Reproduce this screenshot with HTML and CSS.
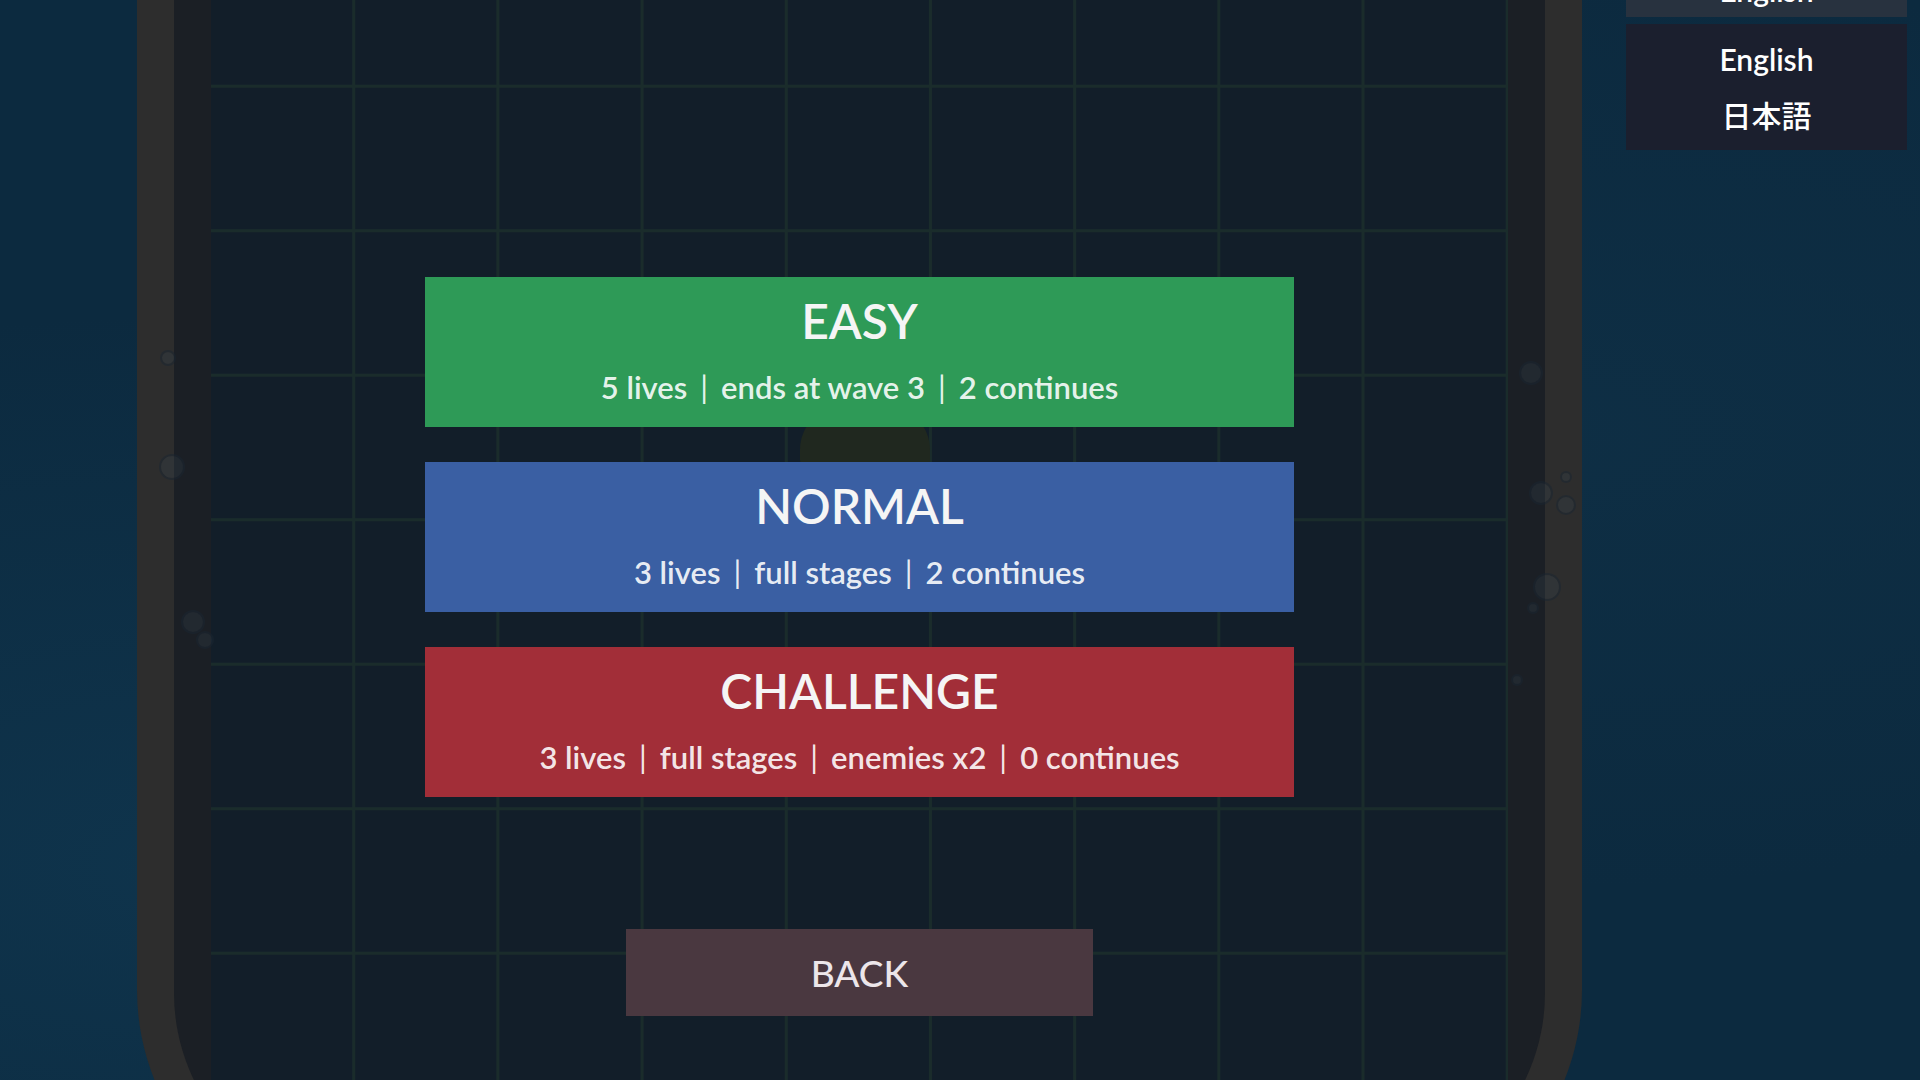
FILE: index.html
```html
<!DOCTYPE html>
<html lang="en">
<head>
    <meta charset="UTF-8">
    <meta name="viewport" content="width=device-width, initial-scale=1.0">
    <title>Select Difficulty</title>
    <link rel="stylesheet" href="styles.css">
</head>
<body>
    <div class="scene">
        <div class="board">
            <div class="frame">
                <div class="grid">
                    <div class="ship"></div>

                    <div class="menu">
                        <button class="mode easy">
                            <span class="mode-name">EASY</span>
                            <span class="mode-info">5 lives<i>|</i>ends at wave 3<i>|</i>2 continues</span>
                        </button>
                        <button class="mode normal">
                            <span class="mode-name">NORMAL</span>
                            <span class="mode-info">3 lives<i>|</i>full stages<i>|</i>2 continues</span>
                        </button>
                        <button class="mode challenge">
                            <span class="mode-name">CHALLENGE</span>
                            <span class="mode-info">3 lives<i>|</i>full stages<i>|</i>enemies x2<i>|</i>0 continues</span>
                        </button>
                    </div>

                    <button class="back">BACK</button>
                </div>
            </div>

            <!-- bubbles stuck on the rim -->
            <span class="bubble" style="left: 23px; top: 350px; width: 16px; height: 16px;"></span>
            <span class="bubble" style="left: 22px; top: 454px; width: 26px; height: 26px;"></span>
            <span class="bubble" style="left: 44px; top: 610px; width: 24px; height: 24px;"></span>
            <span class="bubble" style="left: 59px; top: 631px; width: 18px; height: 18px;"></span>
            <span class="bubble" style="left: 1382px; top: 361px; width: 24px; height: 24px;"></span>
            <span class="bubble" style="left: 1423px; top: 471px; width: 12px; height: 12px;"></span>
            <span class="bubble" style="left: 1392px; top: 481px; width: 24px; height: 24px;"></span>
            <span class="bubble" style="left: 1419px; top: 495px; width: 20px; height: 20px;"></span>
            <span class="bubble" style="left: 1396px; top: 573px; width: 28px; height: 28px;"></span>
            <span class="bubble" style="left: 1390px; top: 602px; width: 12px; height: 12px;"></span>
            <span class="bubble" style="left: 1374px; top: 674px; width: 12px; height: 12px;"></span>
        </div>

        <div class="lang">
            <div class="lang-current">English</div>
            <ul class="lang-list">
                <li>English</li>
                <li lang="ja">日本語</li>
            </ul>
        </div>
    </div>
</body>
</html>
```

FILE: styles.css
```css
* {
    margin: 0;
    padding: 0;
    box-sizing: border-box;
}

html, body {
    width: 100%;
    height: 100%;
    overflow: hidden;
}

body {
    font-family: "Lato", "Open Sans", "Noto Sans CJK JP", sans-serif;
    background-color: #0c2a3f;
    background-image:
        radial-gradient(ellipse at 10% 80%, rgba(20, 70, 100, 0.35), transparent 45%),
        radial-gradient(ellipse at 80% 40%, rgba(20, 60, 85, 0.25), transparent 50%);
    color: #fff;
}

.scene {
    display: flex;
    align-items: flex-start;
    gap: 44px;
    padding-left: 137px;
}

/* play field */
.board {
    position: relative;
    flex-shrink: 0;
    width: 1445px;
    height: 1230px;
    padding: 0 37px 37px;
    background: #2d2d2d;
    border-radius: 0 0 240px 240px;
}

.frame {
    height: 100%;
    padding: 0 37px 37px;
    background: #1b1f25;
    border-radius: 0 0 200px 200px;
    overflow: hidden;
}

.grid {
    position: relative;
    height: 100%;
    display: flex;
    flex-direction: column;
    align-items: center;
    padding-top: 277px;
    background-color: #121e29;
    background-image:
        linear-gradient(to right, transparent 141px, #1a2c2b 141px, #1a2c2b 144px, transparent 144px),
        linear-gradient(to bottom, transparent 85px, #1a2c2b 85px, #1a2c2b 88px, transparent 88px);
    background-size: 144.2px 144.5px;
}

.ship {
    position: absolute;
    left: 589px;
    top: 405px;
    width: 130px;
    height: 65px;
    background: #20281f;
    border-radius: 45px 45px 10px 10px;
}

.bubble {
    position: absolute;
    border-radius: 50%;
    background: rgba(58, 76, 90, 0.22);
    border: 2px solid rgba(18, 26, 34, 0.4);
}

/* difficulty buttons */
.menu {
    position: relative;
    display: flex;
    flex-direction: column;
    gap: 35px;
    width: 869px;
}

button {
    font-family: inherit;
    border: none;
    cursor: pointer;
    color: #f5f5f5;
}

.mode {
    height: 150px;
    display: flex;
    flex-direction: column;
    align-items: center;
    padding-top: 20px;
}

.mode-name {
    font-size: 48px;
    line-height: 48px;
    font-weight: 600;
}

.mode-info {
    margin-top: 27px;
    font-size: 31px;
    line-height: 31px;
    font-weight: 600;
    color: rgba(255, 255, 255, 0.9);
}

.mode-info i {
    font-style: normal;
    font-weight: 400;
    margin: 0 13px;
}

.easy {
    background: #2e9a57;
}

.normal {
    background: #3a5fa3;
}

.challenge {
    background: #a22e38;
}

.back {
    position: relative;
    margin-top: 132px;
    width: 467px;
    height: 87px;
    background: #4a3840;
    font-size: 37px;
    font-weight: 500;
    color: #ece6ea;
}

/* language picker */
.lang {
    width: 281px;
    flex-shrink: 0;
    text-align: center;
    font-size: 30px;
    font-weight: 600;
}

.lang-current {
    margin-top: -36px;
    height: 53px;
    line-height: 53px;
    background: #28323f;
}

.lang-list {
    list-style: none;
    margin-top: 7px;
    padding: 7px 0;
    background: #1b1f2e;
}

.lang-list li {
    height: 56px;
    line-height: 56px;
}

.lang-list li[lang="ja"] {
    font-weight: 500;
}
```
